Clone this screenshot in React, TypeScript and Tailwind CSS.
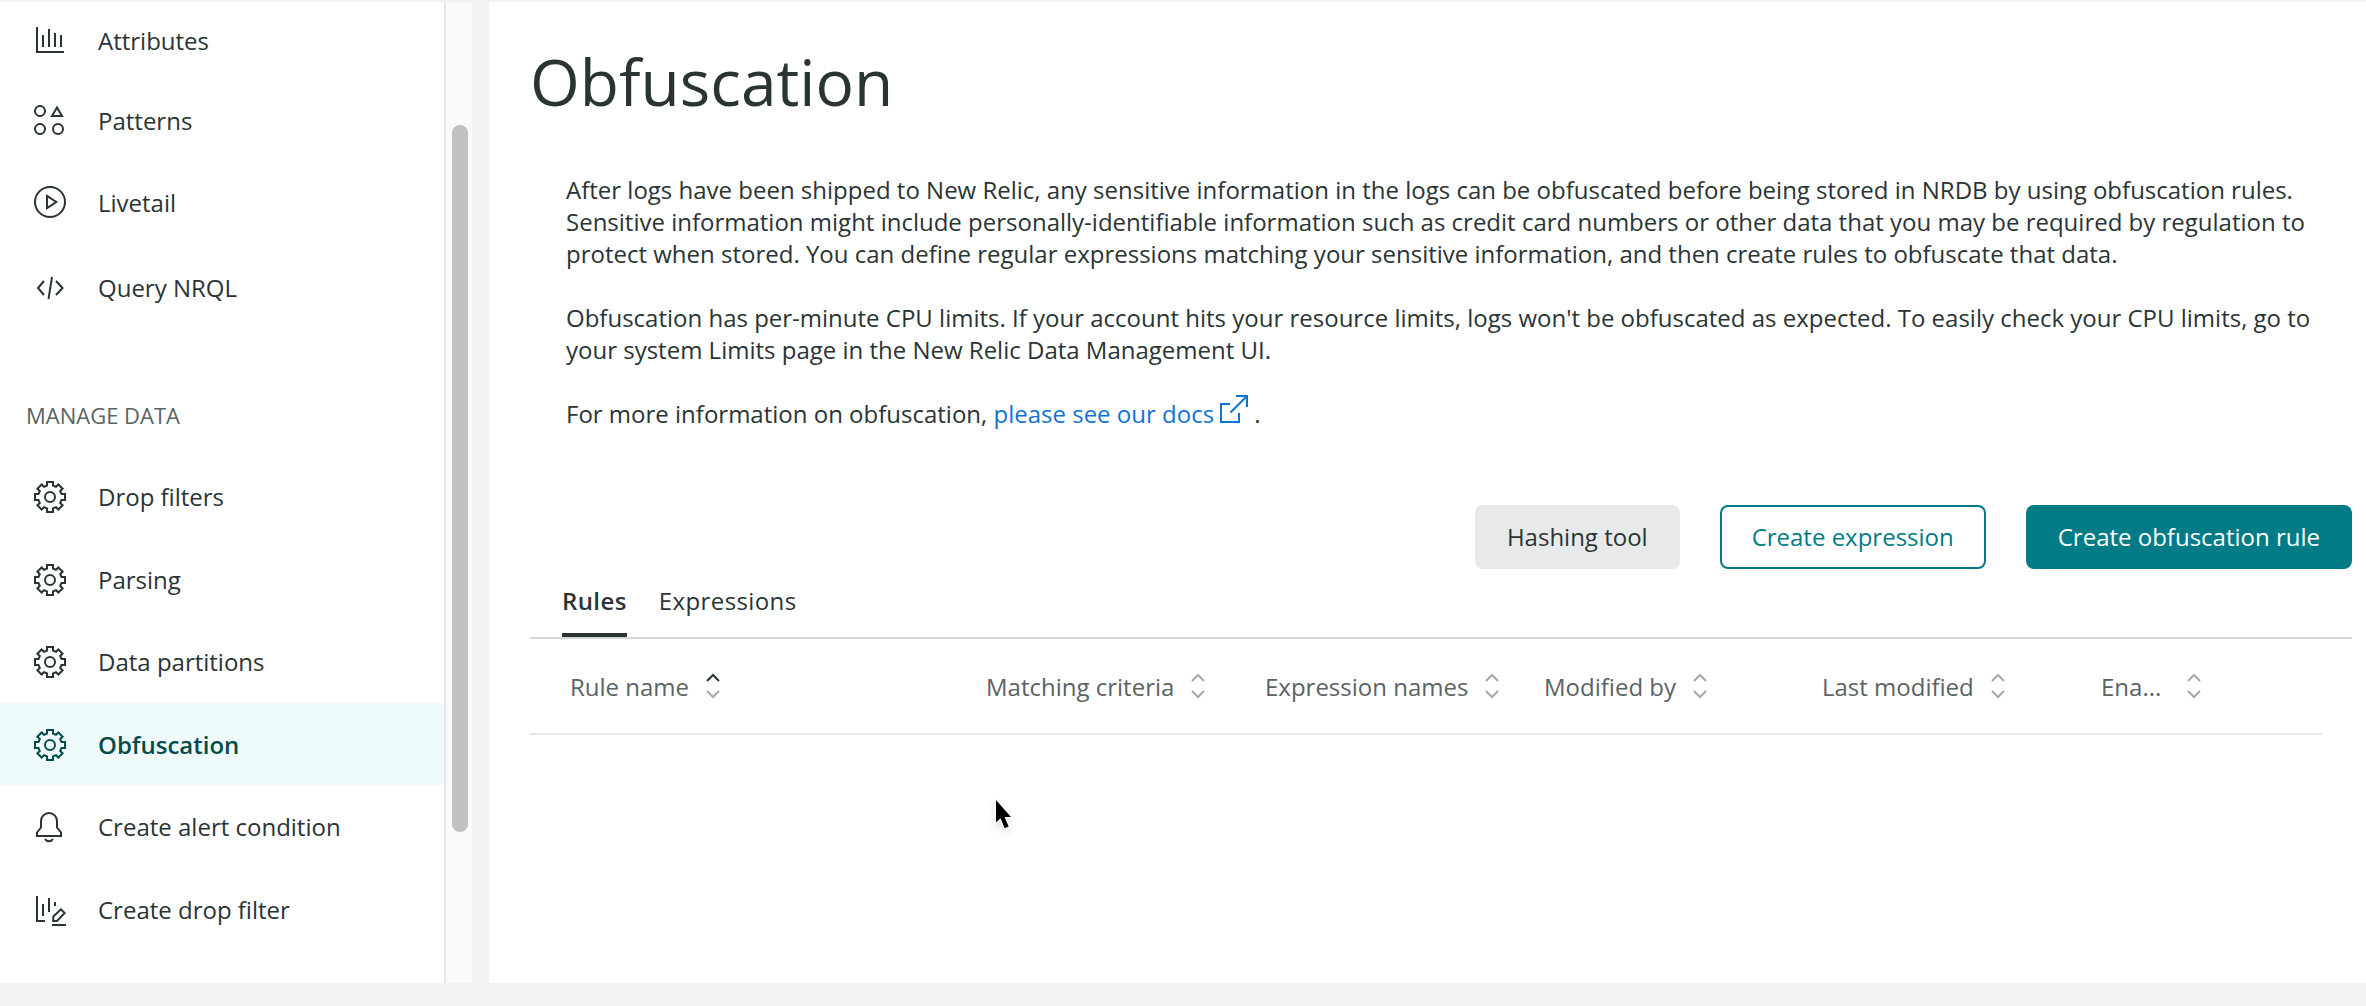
import React from "react";

type IconProps = { className?: string };

const base = {
  fill: "none",
  stroke: "currentColor",
  strokeWidth: 2,
} as const;

const ChartIcon = () => (
  <svg width="32" height="32" viewBox="0 0 32 32" {...base}>
    <path d="M3 3v25h27M9 11v12M15 5v18M21 9v14M27 11v12" />
  </svg>
);

const PatternsIcon = () => (
  <svg width="32" height="32" viewBox="0 0 32 32" {...base}>
    <circle cx="6" cy="7" r="5" />
    <circle cx="6" cy="25" r="5" />
    <circle cx="24" cy="25" r="5" />
    <path d="M18 12L23 3.500l5 8.500z" />
  </svg>
);

const PlayIcon = () => (
  <svg width="32" height="32" viewBox="0 0 32 32" {...base}>
    <circle cx="16" cy="16" r="15" />
    <path d="M13 9.8v12.4L22.3 16z" />
  </svg>
);

const CodeIcon = () => (
  <svg width="32" height="32" viewBox="0 0 32 32" {...base}>
    <path d="M10 10l-6 7 6 7M22 10l6.500 7-6.500 7M18 6l-3.500 22" />
  </svg>
);

const GearIcon = () => (
  <svg width="32" height="32" viewBox="0 0 32 32" {...base}>
    <circle cx="16" cy="16" r="5" />
    <path d="M13 1h6v3.600l3 1.200 2.400-2.300 4.200 4.200L26.200 10l1.300 3H31v6h-3.500l-1.300 3 2.400 2.300-4.200 4.200-2.400-2.300-3 1.200V31h-6v-3.600l-3-1.200-2.400 2.300-4.200-4.200L5.800 22l-1.300-3H1v-6h3.500l1.300-3-2.400-2.300 4.200-4.200L10 5.800l3-1.200z" />
  </svg>
);

const BellIcon = () => (
  <svg width="32" height="32" viewBox="0 0 32 32" {...base}>
    <path d="M3 25v-3.500l4-5V10a8 8 0 0 1 16 0v6.500l4 5V25z" />
    <path d="M11 28c1 1.700 2.400 2.300 4 2.300s3-.6 4-2.300" />
  </svg>
);

const ChartEditIcon = () => (
  <svg width="32" height="32" viewBox="0 0 32 32" {...base}>
    <path d="M3 2v25h8M9 10v12M15 4v14M21 8v4M18 31h14" />
    <path d="M19.300 27v-4.500l7.700-7.200 3.700 3.700-7.700 8z" />
  </svg>
);

const ExternalIcon = ({ className }: IconProps) => (
  <svg width="32" height="32" viewBox="0 0 32 32" className={className} {...base}>
    <path d="M12 11H3v18h18v-9M12.500 19.500L28.500 3.500M18 3h11v11" />
  </svg>
);

const SortIcon = ({ active }: { active?: boolean }) => (
  <svg width="16" height="26" viewBox="0 0 16 26" fill="none" strokeWidth="2">
    <path d="M2 8l6-6 6 6" stroke={active ? "#2a3434" : "#a5a8a8"} />
    <path d="M2 18l6 6 6-6" stroke="#a5a8a8" />
  </svg>
);

type NavItem = { label: string; icon: React.ReactNode; size: string; active?: boolean };

const exploreItems: NavItem[] = [
  { label: "Attributes", icon: <ChartIcon />, size: "h-[80px]" },
  { label: "Patterns", icon: <PatternsIcon />, size: "h-[80px]" },
  { label: "Livetail", icon: <PlayIcon />, size: "h-[84px]" },
  { label: "Query NRQL", icon: <CodeIcon />, size: "h-[86px]" },
];

const manageItems: NavItem[] = [
  { label: "Drop filters", icon: <GearIcon />, size: "h-[84px]" },
  { label: "Parsing", icon: <GearIcon />, size: "h-[82px]" },
  { label: "Data partitions", icon: <GearIcon />, size: "h-[82px]" },
  { label: "Obfuscation", icon: <GearIcon />, size: "h-[82px] pt-0.5", active: true },
  { label: "Create alert condition", icon: <BellIcon />, size: "h-[83px]" },
  { label: "Create drop filter", icon: <ChartEditIcon />, size: "h-[84px]" },
];

const NavRow = ({ item, textClass = "" }: { item: NavItem; textClass?: string }) => (
  <a
    className={`flex items-center pl-[34px] ${item.size} ${
      item.active ? "bg-[#effbfb] font-semibold text-[#034c4b]" : ""
    }`}
  >
    {item.icon}
    <span className={`ml-8 ${textClass}`}>{item.label}</span>
  </a>
);

const columns = [
  { label: "Rule name", width: "w-[416px]", active: true },
  { label: "Matching criteria", width: "w-[279px]" },
  { label: "Expression names", width: "w-[279px]" },
  { label: "Modified by", width: "w-[278px]" },
  { label: "Last modified", width: "w-[279px]" },
  { label: "Ena...", width: "w-[200px]", wide: true },
];

export default function App() {
  return (
    <div className="relative flex h-[1006px] w-[2366px] overflow-hidden bg-[#f2f2f2] pt-0.5 pb-[23px] font-['Open_Sans',sans-serif] text-[24px] leading-8 text-[#2a3434]">
      <nav className="w-[444px] shrink-0 bg-white">
        <div className="-mt-0.5 border-t-2 border-[#f2f2f2]">
          <div className="-mt-0.5">
            {exploreItems.map((item) => (
              <NavRow key={item.label} item={item} textClass="pt-0.5" />
            ))}
          </div>
        </div>
        <h2 className="mt-[69px] ml-[26px] text-[22px] text-[#5b6363]">MANAGE DATA</h2>
        <div className="mt-[24px]">
          {manageItems.map((item) => (
            <NavRow key={item.label} item={item} />
          ))}
        </div>
      </nav>
      <div className="w-[28px] shrink-0 border-l-2 border-[#e6e6e6] bg-[#fafafa] pt-[123px]">
        <div className="ml-[6px] h-[707px] w-4 rounded-full bg-[#c1c1c1]" />
      </div>
      <main className="ml-[17px] flex-1 bg-white pl-[41px]">
        <h1 className="mt-[36px] text-[64px] leading-[88px]">Obfuscation</h1>
        <div className="mt-[48px] ml-[36px] w-[1760px] space-y-8">
          <p>
            After logs have been shipped to New Relic, any sensitive information in the logs can be obfuscated before being stored in NRDB by using obfuscation rules.
            <br />
            Sensitive information might include personally-identifiable information such as credit card numbers or other data that you may be required by regulation to
            <br />
            protect when stored. You can define regular expressions matching your sensitive information, and then create rules to obfuscate that data.
          </p>
          <p>
            Obfuscation has per-minute CPU limits. If your account hits your resource limits, logs won't be obfuscated as expected. To easily check your CPU limits, go to
            <br />
            your system Limits page in the New Relic Data Management UI.
          </p>
          <p className="flex h-8 whitespace-pre">
            For more information on obfuscation, <a className="text-[#1372d6]">please see our docs</a>
            <ExternalIcon className="-mt-[5px] -mr-0.5 ml-1 text-[#1372d6]" /> .
          </p>
        </div>
        <div className="mt-[75px] mr-[14px] flex justify-end gap-10">
          <button className="h-16 rounded-lg bg-[#e7e9ea] px-8">Hashing tool</button>
          <button className="h-16 rounded-lg border-2 border-[#017c86] px-[30px] text-[#017c86]">Create expression</button>
          <button className="h-16 rounded-lg bg-[#017c86] px-8 text-white">Create obfuscation rule</button>
        </div>
        <div className="mr-[14px] flex h-[70px] gap-8 border-b-2 border-[#d4d5d5] pl-8 tracking-[0.4px]">
          <a className="border-b-4 border-[#2a3434] pt-4 font-semibold">Rules</a>
          <a className="pt-4">Expressions</a>
        </div>
        <div className="mr-[44px] flex h-[96px] items-center border-b-2 border-[#e8e8e8] pl-10 text-[#5b6363]">
          {columns.map((column) => (
            <div key={column.label} className={`flex items-center ${column.width}`}>
              <span className={column.wide ? "mr-[25px] pt-0.5" : "mr-4 pt-0.5"}>{column.label}</span>
              <SortIcon active={column.active} />
            </div>
          ))}
        </div>
      </main>
      <svg className="absolute top-[796px] left-[990px] overflow-visible drop-shadow-md" width="30" height="42" viewBox="0 0 30 42">
        <path
          d="M6 4v22.500l4.500-4.300 4.200 10 4-1.700-4.200-9.500h6.500z"
          fill="#000"
          stroke="#fff"
          strokeWidth="3"
          paintOrder="stroke"
        />
      </svg>
    </div>
  );
}
